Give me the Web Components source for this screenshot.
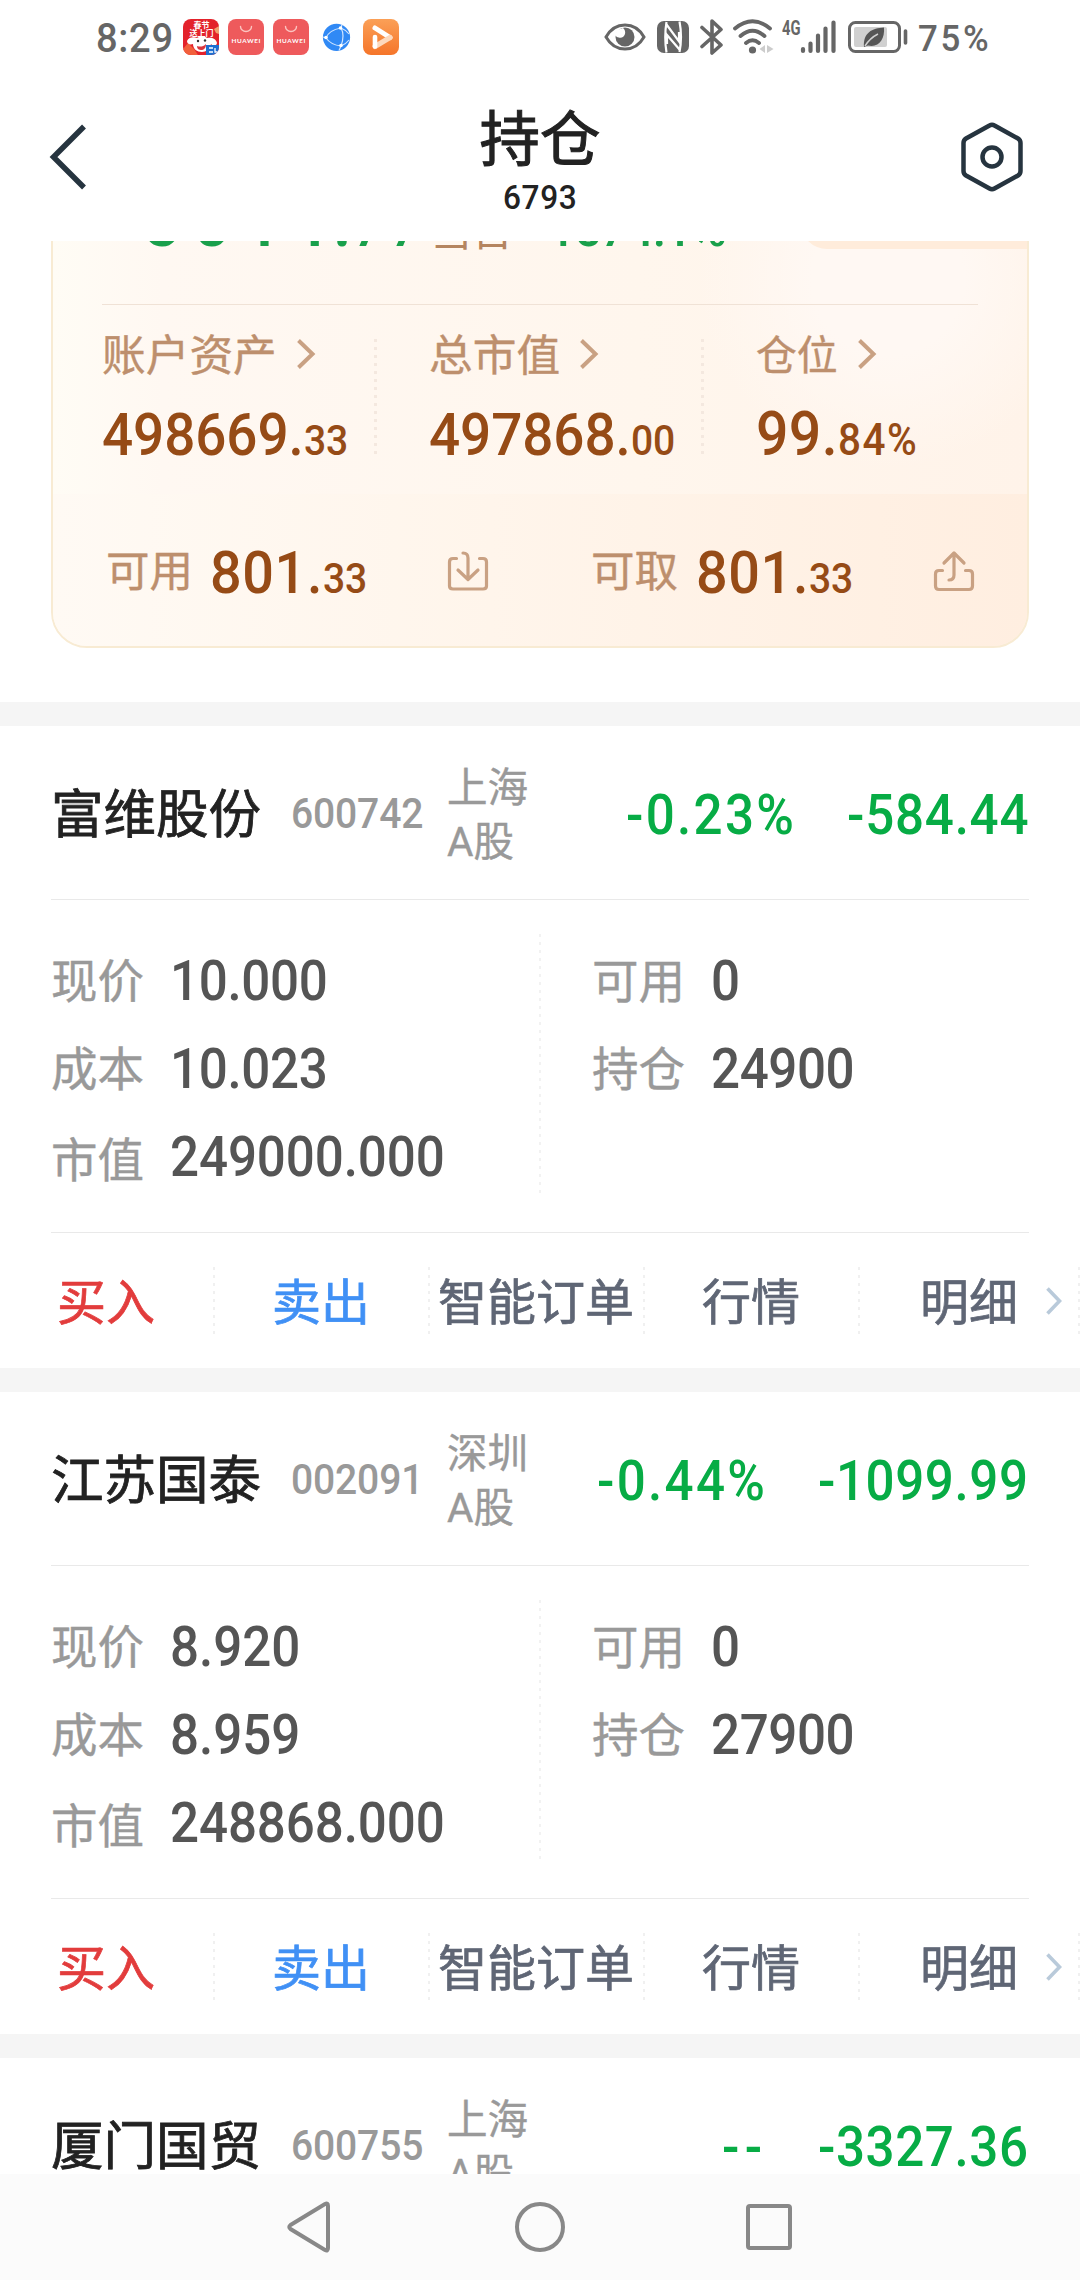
<!DOCTYPE html>
<html lang="zh-CN">
<head>
<meta charset="utf-8">
<title>持仓</title>
<style>
  html, body {
    margin: 0;
    height: 100%;
    background: #fff;
    overflow: hidden;
  }

  body {
    font-family: Roboto, "Noto Sans CJK SC", sans-serif;
    line-height: 1;
    color: #222;
  }
</style>
</head>
<body>
<holdings-page></holdings-page>

<script>
// Narrow numerals: glyphs are condensed a little, then tracked to fill `width`
class NumText extends HTMLElement {
  constructor() {
    super();
    this.attachShadow({ mode: "open" });
  }

  connectedCallback() {
    const size = this.getAttribute("size") || "55";
    const weight = this.getAttribute("weight") || "500";
    const width = parseFloat(this.getAttribute("width"));
    const squeeze = 0.93;

    this.shadowRoot.innerHTML = `
      <style>
        :host {
          display: inline-block;
          flex: none;
          white-space: nowrap;
          width: ${width}px;
          font-size: ${size}px;
          font-weight: ${weight};
          line-height: 1;
        }

        span {
          display: inline-block;
          transform-origin: 0 50%;
          transform: scaleX(${squeeze});
        }
      </style>
      <span><slot></slot></span>
    `;

    const span = this.shadowRoot.querySelector("span");
    const natural = span.offsetWidth;
    const count = this.textContent.length;
    span.style.letterSpacing = `${(width / squeeze - natural) / count}px`;
  }
}

class StatusBar extends HTMLElement {
  constructor() {
    super();
    this.attachShadow({ mode: "open" });
  }

  connectedCallback() {
    const bag = `
      <svg width="36" height="36" viewBox="0 0 36 36">
        <rect width="36" height="36" rx="8" fill="#ee5a5c"/>
        <path d="M12.5 7.5a5.5 5 0 0 0 11 0" fill="none" stroke="#fbc4c0" stroke-width="1.4" stroke-linecap="round"/>
        <text x="18" y="23.5" text-anchor="middle" textLength="29" font-family="Lato, sans-serif" font-size="6.4" font-weight="700" fill="#fff">HUAWEI</text>
      </svg>`;

    this.shadowRoot.innerHTML = `
      <style>
        :host {
          display: flex;
          justify-content: space-between;
          align-items: center;
          height: 73px;
          padding: 0 89px 0 96px;
          color: #666;
        }

        div {
          display: flex;
          align-items: center;
        }

        svg {
          display: block;
          flex: none;
        }

        .apps {
          gap: 9px;
        }

        .time {
          padding-top: 3px;
        }
      </style>

      <div class="apps">
        <num-text class="time" size="41" width="78">8:29</num-text>
        <svg width="36" height="36" viewBox="0 0 36 36">
          <clipPath id="r"><rect width="36" height="36" rx="8"/></clipPath>
          <g clip-path="url(#r)">
            <rect width="36" height="36" fill="#e3222b"/>
            <path d="M0 30l5-6 6 6 4 6H0z" fill="#f2603c"/>
            <path d="M31 10l5-3v8l-3-1z" fill="#f0a070"/>
            <path d="M4 22c2-5 8-4 10-3 3-2 8-2 10 0 4-1 9 0 10 5-1 4-4 3-6 1-1 5-5 8-9 8-5 0-9-3-9-8-3 1-6 0-6-3z" fill="#fff"/>
            <circle cx="15" cy="22" r="1.2" fill="#333"/>
            <circle cx="22" cy="21.500" r="1.2" fill="#333"/>
            <path d="M14 27c3 1 6 1 9-2 0 4-2 6-5 6-2 0-4-1-4-4z" fill="#d9363e"/>
            <rect x="23" y="26" width="13" height="10" fill="#1f6fd0"/>
            <path d="M26 29h4m-4 4h4m2-4v4h3" stroke="#fff" stroke-width="1.300" fill="none"/>
          </g>
          <text x="18.500" y="9" text-anchor="middle" font-size="8" font-weight="700" fill="#fff">春节</text>
          <text x="18.500" y="17" text-anchor="middle" font-size="8" font-weight="700" fill="#fff">送上门</text>
        </svg>
        ${bag}
        ${bag}
        <svg width="36" height="36" viewBox="0 0 36 36">
          <circle cx="18.500" cy="18.300" r="13.600" fill="#3089f5"/>
          <g fill="none" stroke="#cfe4ff" stroke-width="1.200">
            <path d="M23 9Q11 11 8 19Q13 26 23 27Q27 16 23 9M23 27l-2 4.500M23 27q5-2 8-6M23 9l1-3.500M23 9q5 2 8 6M8 19l-3-1"/>
          </g>
          <g fill="#fff">
            <circle cx="22.500" cy="9" r="1.800"/><circle cx="8" cy="18.500" r="1.800"/><circle cx="23" cy="26.500" r="1.800"/>
          </g>
        </svg>
        <svg width="36" height="36" viewBox="0 0 36 36">
          <defs>
            <linearGradient id="o" x2="0" y2="1"><stop stop-color="#fba057"/><stop offset="1" stop-color="#f5752a"/></linearGradient>
          </defs>
          <rect width="36" height="36" rx="8" fill="url(#o)"/>
          <path d="M12 9L27 18.500" stroke="#fff" stroke-width="5" stroke-linecap="round"/>
          <path d="M27 18.500L12 27.500" stroke="#fdd9bd" stroke-width="5" stroke-linecap="round"/>
          <path d="M12 18v9.500" stroke="#fff" stroke-width="4.600" stroke-linecap="round"/>
        </svg>
      </div>

      <div>
        <svg width="42" height="28" viewBox="0 0 42 28">
          <path d="M2 14C11-2 31-2 40 14 31 30 11 30 2 14z" fill="none" stroke="#666" stroke-width="3"/>
          <circle cx="21" cy="14" r="9.500" fill="#666"/>
          <path d="M11 12a5.500 5.500 0 0 0 10-1 6 6 0 0 0-2-6l-6 2z" fill="#fff"/>
        </svg>
        <svg style="margin-left:11px" width="32" height="32" viewBox="0 0 32 32">
          <rect width="32" height="32" rx="7" fill="#666"/>
          <path d="M9.500 31.500Q7 16 9.500 1M22.500 .5Q25.500 16 22.500 31" fill="none" stroke="#fff" stroke-width="2.200"/>
          <path d="M9.500 3.500L22 20.500V11M22.500 28.500L10 14v9" fill="none" stroke="#fff" stroke-width="2.200"/>
        </svg>
        <svg style="margin-left:11px" width="24" height="36" viewBox="0 0 24 36">
          <path d="M2 8.500L21 26l-9 8V2l9 8.500L2 27.500" fill="none" stroke="#666" stroke-width="3.600" stroke-linejoin="round" stroke-linecap="round"/>
        </svg>
        <svg style="margin-left:9px" width="41" height="36" viewBox="0 0 41 36">
          <g fill="none" stroke="#666" stroke-width="3.800" stroke-linecap="round">
            <path d="M2 9.500Q19.500-5 37 9.500M7.500 17Q19.500 6.500 31.500 17M13 24Q19.500 18.500 26 24"/>
          </g>
          <circle cx="19.500" cy="31" r="3.600" fill="#666"/>
          <path d="M32 26v8l-5.500-4zM34 26v8l6.500-4z" fill="#ccc"/>
        </svg>
        <svg style="margin-left:7px" width="55" height="36" viewBox="-1 0 55 36">
          <text x="0" y="16" font-size="20" font-weight="700" textLength="18.500" lengthAdjust="spacingAndGlyphs" fill="#666">4G</text>
          <path d="M21 30v2M28.500 24.500v7.500M36 16.500V32M43.500 9.500V32M51.500 3.500V32" fill="none" stroke="#666" stroke-width="4.200" stroke-linecap="round"/>
        </svg>
        <svg style="margin-left:12px" width="60" height="32" viewBox="0 0 60 32">
          <rect x="1.500" y="1.500" width="50" height="29" rx="6" fill="none" stroke="#666" stroke-width="3"/>
          <rect x="6" y="6" width="33" height="20" rx="2" fill="#d0d0d0"/>
          <path d="M16 26C15 12 24 7 36 6.500 37 18 31 27 20 24.500z" fill="#555"/>
          <path d="M17 25q5-8 13-12" stroke="#d0d0d0" stroke-width="1.500" fill="none"/>
          <path d="M57.500 10v12" stroke="#666" stroke-width="3.600" stroke-linecap="round"/>
        </svg>
        <num-text style="margin:4px 0 0 10px" size="37.500" width="73">75%</num-text>
      </div>
    `;
  }
}

class NavHeader extends HTMLElement {
  constructor() {
    super();
    this.attachShadow({ mode: "open" });
  }

  connectedCallback() {
    this.shadowRoot.innerHTML = `
      <style>
        :host {
          display: flex;
          justify-content: space-between;
          align-items: center;
          height: 168px;
          padding: 0 57px 0 48px;
        }

        svg {
          display: block;
        }

        .titles {
          display: flex;
          flex-direction: column;
          align-items: center;
          gap: 9px;
          padding: 11px 0 0 9px;
        }

        .title {
          font-size: 60.5px;
          -webkit-text-stroke: 1px currentColor;
        }
      </style>

      <svg width="62" height="68" viewBox="0 0 62 68">
        <path d="M36 3.500L5.500 34 36 64.500" fill="none" stroke="#26343f" stroke-width="5.500"/>
      </svg>
      <div class="titles">
        <div class="title"><slot></slot></div>
        <num-text size="34" width="74">${this.getAttribute("account")}</num-text>
      </div>
      <svg width="62" height="70" viewBox="0 0 62 70">
        <path d="M28.500 3.500Q31 2 33.500 3.500L57 16.500Q59.500 18 59.500 21V49Q59.500 52 57 53.500L33.500 66.500Q31 68 28.500 66.500L5 53.500Q2.500 52 2.500 49V21Q2.500 18 5 16.500z" fill="none" stroke="#26343f" stroke-width="4.500"/>
        <circle cx="31" cy="35" r="9.500" fill="none" stroke="#26343f" stroke-width="4.500"/>
      </svg>
    `;
  }
}

class AssetStat extends HTMLElement {
  constructor() {
    super();
    this.attachShadow({ mode: "open" });
  }

  connectedCallback() {
    this.shadowRoot.innerHTML = `
      <style>
        :host {
          display: block;
          flex: none;
        }

        .label {
          display: flex;
          align-items: center;
          gap: 19px;
          height: 44px;
          font-size: 43.7px;
          color: #bd8f6d;
          white-space: nowrap;
        }

        .label span {
          padding-top: 5px;
          -webkit-text-stroke: .4px currentColor;
        }

        :host([small]) .label {
          font-size: 40.8px;
        }

        .value {
          margin-top: 29px;
          color: #964b16;
          white-space: nowrap;
        }

        :host([small]) .value {
          margin-top: 28px;
        }
      </style>

      <div class="label">
        <span>${this.getAttribute("label")}</span>
        <svg width="20" height="32" viewBox="0 0 20 32">
          <path d="M2.500 2.500L16.500 16 2.500 29.500" fill="none" stroke="#c9a183" stroke-width="4"/>
        </svg>
      </div>
      <div class="value"><slot></slot></div>
    `;
  }
}

class AssetCard extends HTMLElement {
  constructor() {
    super();
    this.attachShadow({ mode: "open" });
  }

  connectedCallback() {
    this.shadowRoot.innerHTML = `
      <style>
        :host {
          display: block;
          box-sizing: border-box;
          height: 466px;
          margin: -59px 51px 0;
          border: 2px solid #f8ebd3;
          border-radius: 36px;
          overflow: hidden;
          background:
            radial-gradient(ellipse 190px 190px at 835px 95px, #fff8f3 40%, transparent 100%),
            linear-gradient(90deg, #fffcf5 0, #fff8f2 110px, #fff6ed 60%, #fff3e9 100%);
        }

        .summary {
          display: flex;
          align-items: baseline;
          box-sizing: border-box;
          height: 121px;
          margin: 0 49px;
          padding-left: 5px;
          border-bottom: 1px solid #f0e2d6;
          color: #19a04b;
        }

        .summary b {
          padding: 0 20px 0 4px;
          font-size: 41px;
          font-weight: 400;
          color: #b58560;
        }

        .corner {
          width: 228px;
          height: 65px;
          margin: 0 -51px -6px auto;
          border-bottom-left-radius: 26px;
          align-self: flex-start;
          background: #ffecdb;
        }

        .stats {
          display: flex;
          box-sizing: border-box;
          height: 189px;
          padding: 27px 0 0 49px;
        }

        .dots {
          flex: none;
          width: 3px;
          height: 117px;
          margin: 7px 52px 0 26px;
          background: repeating-linear-gradient(#f4e8df 0 3px, transparent 3px 8px);
        }

        .cash {
          display: flex;
          align-items: center;
          height: 153px;
          padding: 4px 0 0 53px;
          box-sizing: border-box;
          background: linear-gradient(90deg, #fffaf4, #fff5eb 45%, #ffeee0);
          color: #964b16;
        }

        .cash label {
          flex: none;
          width: 104px;
          font-size: 43.5px;
          white-space: nowrap;
          color: #bd8f6d;
          -webkit-text-stroke: .4px currentColor;
        }

        .cash span {
          display: flex;
          flex: none;
          align-items: baseline;
          padding-top: 1px;
        }

        .cash svg {
          flex: none;
          display: block;
          margin: -3px 102px 0 80px;
        }

        .cash svg + label {
          width: 105px;
        }
      </style>

      <div class="summary">
        <num-text size="74" width="186">-501</num-text><num-text size="74" width="60">1.</num-text><num-text size="58" width="74">77</num-text>
        <b>当日</b>
        <num-text size="52" width="192">-1574.1%</num-text>
        <div class="corner"></div>
      </div>
      <div class="stats">
        <asset-stat label="账户资产"><num-text size="59" width="202">498669.</num-text><num-text size="42" width="44">33</num-text></asset-stat>
        <div class="dots"></div>
        <asset-stat label="总市值"><num-text size="59" width="202">497868.</num-text><num-text size="42" width="44">00</num-text></asset-stat>
        <div class="dots"></div>
        <asset-stat small label="仓位"><num-text size="61.500" width="82">99.</num-text><num-text size="43.500" width="80">84%</num-text></asset-stat>
      </div>
      <div class="cash">
        <label>可用</label>
        <span><num-text size="60" width="113">801.</num-text><num-text size="42" width="44">33</num-text></span>
        <svg width="42" height="42" viewBox="0 0 42 42">
          <g fill="none" stroke="#c9a183" stroke-width="3.200" stroke-linecap="round" stroke-linejoin="round">
            <path d="M9.500 8.500H6Q2.500 8.500 2.500 12V36Q2.500 39 6 39H36Q39.500 39 39.500 36V12Q39.500 8.500 36 8.500H32.500"/>
            <path d="M16 3Q21 3 21 8V28.500M11 20L21 29.500 31 20"/>
          </g>
        </svg>
        <label>可取</label>
        <span><num-text size="60" width="113">801.</num-text><num-text size="42" width="44">33</num-text></span>
        <svg width="42" height="42" viewBox="0 0 42 42">
          <g fill="none" stroke="#c9a183" stroke-width="3.200" stroke-linecap="round" stroke-linejoin="round">
            <path d="M9.500 20.500H6Q2.500 20.500 2.500 24V36Q2.500 39.500 6 39.500H36Q39.500 39.500 39.500 36V24Q39.500 20.500 36 20.500H32.500"/>
            <path d="M16 30Q21 30 21 25V3M11 13L21 3 31 13"/>
          </g>
        </svg>
      </div>
    `;
  }
}

class StockCard extends HTMLElement {
  constructor() {
    super();
    this.attachShadow({ mode: "open" });
  }

  set stock(s) {
    const row = ([label, value, width]) => `
      <div class="row"><label>${label}</label><num-text size="55" width="${width}">${value}</num-text></div>`;

    this.shadowRoot.innerHTML = `
      <style>
        :host {
          display: block;
          border-top: 24px solid #f5f5f5;
          height: 642px;
          background: #fff;
        }

        .head {
          display: flex;
          align-items: center;
          height: 173px;
          margin: 0 51px;
          border-bottom: 1px solid #e9e9e9;
        }

        .name {
          flex: none;
          width: 240px;
          padding-top: 6px;
          font-size: 52.5px;
          white-space: nowrap;
          -webkit-text-stroke: .8px currentColor;
        }

        .code {
          padding-top: 2px;
          color: #999;
        }

        .market {
          flex: none;
          width: 90px;
          margin-left: 24px;
          padding-top: 4px;
          font-size: 40.5px;
          line-height: 54px;
          color: #999;
          -webkit-text-stroke: .4px currentColor;
        }

        .pct {
          margin-left: auto;
        }

        .pct, .profit {
          color: #07ac45;
          padding-top: 5px;
        }

        .profit {
          margin-left: 51px;
        }

        .body {
          display: flex;
          height: 332px;
          margin: 0 51px;
          border-bottom: 1px solid #e9e9e9;
        }

        .col {
          flex: none;
          display: flex;
          flex-direction: column;
          width: 488px;
          padding-top: 37px;
        }

        .col.right {
          width: 437px;
        }

        .split {
          flex: none;
          width: 2px;
          height: 259px;
          margin: 34px 51px 0 0;
          background: repeating-linear-gradient(#f2f2f2 0 3px, transparent 3px 8px);
        }

        .row {
          display: flex;
          align-items: center;
          height: 88px;
          color: #555;
        }

        .row label {
          flex: none;
          width: 119px;
          padding-top: 3px;
          font-size: 46.5px;
          color: #999;
          -webkit-text-stroke: .4px currentColor;
        }

        .row:nth-child(3) label {
          padding-top: 9px;
        }

        .actions {
          display: grid;
          grid-template-columns: repeat(4, 215px) 1fr;
          align-items: center;
          height: 135px;
          font-size: 49px;
          color: #5f6675;
          text-align: center;
          white-space: nowrap;
          -webkit-text-stroke: .7px currentColor;
        }

        .actions div {
          display: flex;
          justify-content: center;
          align-items: center;
          box-sizing: border-box;
          height: 67px;
          padding: 6px 3px 0 0;
          background: repeating-linear-gradient(#f0f0f0 0 3px, transparent 3px 8px) right / 2px 100% no-repeat;
        }

        .actions .last {
          justify-content: flex-end;
          gap: 27px;
          padding-right: 17px;
        }

        .last svg {
          margin-top: -6px;
        }

        .buy { color: #e23c3c; }
        .sell { color: #4090f5; }
      </style>

      <div class="head">
        <div class="name">${s.name}</div>
        <num-text class="code" size="42" width="132">${s.code}</num-text>
        <div class="market">${s.market}<br>A股</div>
        <num-text class="pct" width="${s.pct[1]}">${s.pct[0]}</num-text>
        <num-text class="profit" width="${s.profit[1]}">${s.profit[0]}</num-text>
      </div>
      ${s.left ? `
      <div class="body">
        <div class="col">${s.left.map(row).join("")}</div>
        <div class="split"></div>
        <div class="col right">${s.right.map(row).join("")}</div>
      </div>
      <div class="actions">
        <div class="buy">买入</div>
        <div class="sell">卖出</div>
        <div>智能订单</div>
        <div>行情</div>
        <div class="last">明细
          <svg width="18" height="30" viewBox="0 0 18 30">
            <path d="M2.500 2.500L14.500 15 2.500 27.500" fill="none" stroke="#b9cada" stroke-width="3.600"/>
          </svg>
        </div>
      </div>` : ""}
    `;
  }
}

class SystemNav extends HTMLElement {
  constructor() {
    super();
    this.attachShadow({ mode: "open" });
  }

  connectedCallback() {
    this.shadowRoot.innerHTML = `
      <style>
        :host {
          display: flex;
          justify-content: space-between;
          align-items: center;
          height: 106px;
          padding: 0 286px 0 285px;
          background: #fbfbfb;
        }

        svg {
          fill: none;
          stroke: #888;
          stroke-width: 4;
        }
      </style>

      <svg width="50" height="52" viewBox="0 0 50 52">
        <path d="M5.500 24L40 3Q43 1.500 43 5V47Q43 50.500 40 49L5.500 28Q3 26 5.500 24z"/>
      </svg>
      <svg width="52" height="52" viewBox="0 0 52 52"><circle cx="26" cy="26" r="23"/></svg>
      <svg width="50" height="50" viewBox="0 0 50 50"><rect x="4" y="4" width="42" height="42" rx="2"/></svg>
    `;
  }
}

const stocks = [
  {
    name: "富维股份", code: "600742", market: "上海",
    pct: ["-0.23%", 170], profit: ["-584.44", 182],
    left: [["现价", "10.000", 158], ["成本", "10.023", 158], ["市值", "249000.000", 275]],
    right: [["可用", "0", 28], ["持仓", "24900", 143]]
  },
  {
    name: "江苏国泰", code: "002091", market: "深圳",
    pct: ["-0.44%", 170], profit: ["-1099.99", 211],
    left: [["现价", "8.920", 130], ["成本", "8.959", 130], ["市值", "248868.000", 275]],
    right: [["可用", "0", 28], ["持仓", "27900", 143]]
  },
  {
    name: "厦门国贸", code: "600755", market: "上海",
    pct: ["--", 45], profit: ["-3327.36", 211]
  }
];

class HoldingsPage extends HTMLElement {
  constructor() {
    super();
    this.attachShadow({ mode: "open" });
  }

  connectedCallback() {
    this.shadowRoot.innerHTML = `
      <style>
        :host {
          display: flex;
          flex-direction: column;
          width: 1080px;
          height: 2280px;
        }

        main {
          flex: 1;
          min-height: 0;
          overflow: hidden;
        }

        .list {
          padding-top: 54px;
        }
      </style>

      <status-bar></status-bar>
      <nav-header account="6793">持仓</nav-header>
      <main>
        <asset-card></asset-card>
        <div class="list"></div>
      </main>
      <system-nav></system-nav>
    `;

    const list = this.shadowRoot.querySelector(".list");
    stocks.forEach((stock) => {
      const card = document.createElement("stock-card");
      list.appendChild(card);
      card.stock = stock;
    });
  }
}

customElements.define("num-text", NumText);
customElements.define("status-bar", StatusBar);
customElements.define("nav-header", NavHeader);
customElements.define("asset-stat", AssetStat);
customElements.define("asset-card", AssetCard);
customElements.define("stock-card", StockCard);
customElements.define("system-nav", SystemNav);
customElements.define("holdings-page", HoldingsPage);
</script>
</body>
</html>
